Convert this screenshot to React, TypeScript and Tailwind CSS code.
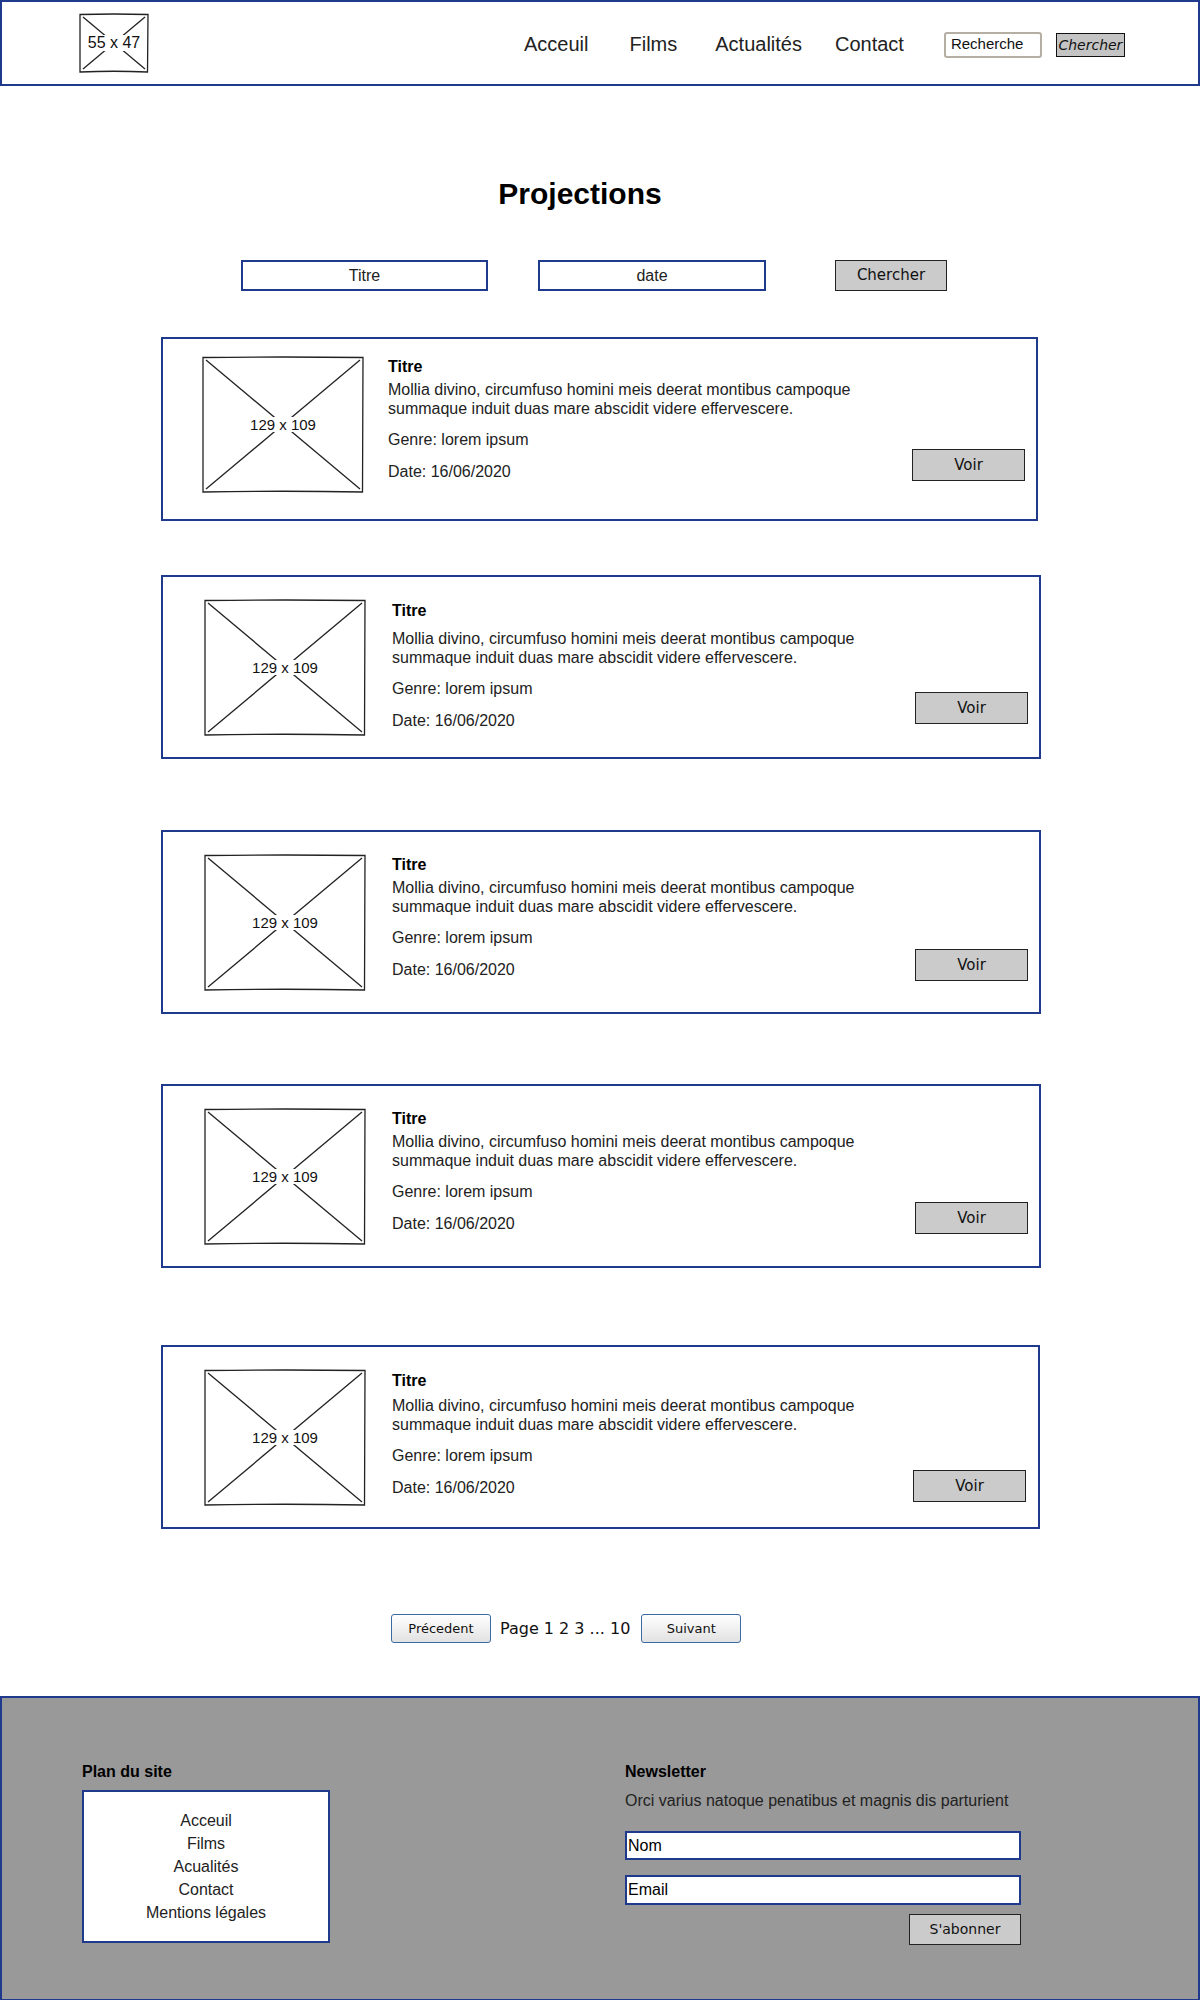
const BLUE = "border-[#1f3a8c]";

const cards = [
  { mt: "mt-[46px]", w: "w-[877px]", img: "ml-[39px] mt-[17px]", txt: "ml-[24px] mt-[18px]", desc: "mt-[4px]", voir: "mt-[110px] mr-[11px]" },
  { mt: "mt-[54px]", w: "w-[880px]", img: "ml-[41px] mt-[22px]", txt: "ml-[26px] mt-[24px]", desc: "mt-[9px]", voir: "mt-[115px] mr-[11px]" },
  { mt: "mt-[71px]", w: "w-[880px]", img: "ml-[41px] mt-[22px]", txt: "ml-[26px] mt-[23px]", desc: "mt-[4px]", voir: "mt-[117px] mr-[11px]" },
  { mt: "mt-[70px]", w: "w-[880px]", img: "ml-[41px] mt-[22px]", txt: "ml-[26px] mt-[23px]", desc: "mt-[4px]", voir: "mt-[116px] mr-[11px]" },
  { mt: "mt-[77px]", w: "w-[879px]", img: "ml-[41px] mt-[22px]", txt: "ml-[26px] mt-[24px]", desc: "mt-[6px]", voir: "mt-[123px] mr-[12px]" },
];

function Placeholder({ w, h, label, textSize }: { w: number; h: number; label: string; textSize: string }) {
  return (
    <div className="relative" style={{ width: w, height: h }}>
      <svg width={w} height={h} className="absolute inset-0" fill="none" stroke="#222" strokeWidth="1.3">
        <path d={`M1 1.5 Q${w / 2} 0.5 ${w - 1} 1.5 L${w - 1.5} ${h - 1} Q${w / 2} ${h - 2.5} 1 ${h - 1} Z`} />
        <line x1="4" y1="4" x2={w - 4} y2={h - 4} />
        <line x1={w - 4} y1="4" x2="4" y2={h - 4} />
      </svg>
      <div className="absolute inset-0 flex items-center justify-center">
        <span className={`bg-white px-[2px] leading-none text-[#111] ${textSize}`}>{label}</span>
      </div>
    </div>
  );
}

function Card({ c }: { c: (typeof cards)[number] }) {
  return (
    <div className={`${c.mt} ml-[161px] ${c.w} h-[184px] border-2 ${BLUE} flex`}>
      <div className={c.img}>
        <Placeholder w={162} h={137} label="129 x 109" textSize="text-[15px]" />
      </div>
      <div className={`${c.txt} flex-1 text-[16px] leading-[19px] text-[#222]`}>
        <div className="font-bold text-black">Titre</div>
        <p className={c.desc}>
          Mollia divino, circumfuso homini meis deerat montibus campoque
          <br />
          summaque induit duas mare abscidit videre effervescere.
        </p>
        <p className="mt-[12px]">Genre: lorem ipsum</p>
        <p className="mt-[13px]">Date: 16/06/2020</p>
      </div>
      <div className={c.voir}>
        <button className="w-[113px] h-[32px] bg-[#cbcbcb] border border-[#222] text-[15px] text-[#111] font-['DejaVu_Sans',sans-serif]">
          Voir
        </button>
      </div>
    </div>
  );
}

export default function App() {
  return (
    <div className="w-[1200px] bg-white font-['Liberation_Sans',Arial,sans-serif] text-[#111]">
      <header className={`h-[86px] border-2 ${BLUE} flex items-center`}>
        <div className="ml-[77px]">
          <Placeholder w={70} h={60} label="55 x 47" textSize="text-[16px]" />
        </div>
        <nav className="ml-[375px] mt-[2px] flex items-center text-[20px] text-[#222]">
          <span>Acceuil</span>
          <span className="ml-[41px]">Films</span>
          <span className="ml-[38px]">Actualités</span>
          <span className="ml-[33px]">Contact</span>
        </nav>
        <div className="ml-[40px] mt-[3px] w-[98px] h-[26px] border-2 border-[#b5aea3] rounded-[3px] flex items-center px-[5px] text-[15px] text-[#111]">
          Recherche
        </div>
        <button className="ml-[14px] mt-[3px] w-[69px] h-[24px] bg-[#c4c4c4] border border-[#111] text-[14px] italic text-[#111] font-['DejaVu_Sans',sans-serif] leading-none">
          Chercher
        </button>
      </header>

      <h1 className="mt-[90px] pr-[40px] text-center text-[30px] leading-[36px] font-bold text-black">
        Projections
      </h1>

      <div className="mt-[48px] ml-[241px] flex items-center text-[16px] text-[#222]">
        <div className={`w-[247px] h-[31px] border-2 ${BLUE} flex items-center justify-center`}>Titre</div>
        <div className={`ml-[50px] w-[228px] h-[31px] border-2 ${BLUE} flex items-center justify-center`}>date</div>
        <button className="ml-[69px] w-[112px] h-[31px] bg-[#cbcbcb] border border-[#222] text-[15px] text-[#111] font-['DejaVu_Sans',sans-serif]">
          Chercher
        </button>
      </div>

      {cards.map((c, i) => (
        <Card key={i} c={c} />
      ))}

      <div className="mt-[85px] ml-[391px] flex items-center">
        <button className="w-[100px] h-[29px] rounded-[3px] border border-[#3b6aa3] bg-linear-to-b from-white to-[#e2e2e2] text-[13px] text-[#111] font-['DejaVu_Sans',sans-serif]">
          Précedent
        </button>
        <span className="ml-[9px] text-[16px] text-[#111] font-['DejaVu_Sans',sans-serif]">Page 1 2 3 ... 10</span>
        <button className="ml-[11px] w-[100px] h-[29px] rounded-[3px] border border-[#3b6aa3] bg-linear-to-b from-white to-[#e2e2e2] text-[13px] text-[#111] font-['DejaVu_Sans',sans-serif]">
          Suivant
        </button>
      </div>

      <footer className={`mt-[53px] h-[305px] border-2 ${BLUE} bg-[#999999] flex`}>
        <div className="ml-[80px] pt-[64px]">
          <div className="font-bold text-[16px] leading-[19px] text-black">Plan du site</div>
          <div className={`mt-[9px] w-[248px] h-[153px] border-2 ${BLUE} bg-white pt-[17px] text-center text-[16px] leading-[23px] text-[#222]`}>
            <div>Acceuil</div>
            <div>Films</div>
            <div>Acualités</div>
            <div>Contact</div>
            <div>Mentions légales</div>
          </div>
        </div>
        <div className="ml-[295px] pt-[64px] w-[396px]">
          <div className="font-bold text-[16px] leading-[19px] text-black">Newsletter</div>
          <p className="mt-[10px] text-[16px] leading-[19px] text-[#222]">
            Orci varius natoque penatibus et magnis dis parturient
          </p>
          <div className={`mt-[21px] h-[29px] border-2 ${BLUE} bg-white flex items-center px-[1px] text-[16px] text-black`}>Nom</div>
          <div className={`mt-[15px] h-[30px] border-2 ${BLUE} bg-white flex items-center px-[1px] text-[16px] text-black`}>Email</div>
          <div className="mt-[9px] flex justify-end">
            <button className="w-[112px] h-[31px] bg-[#cbcbcb] border border-[#222] text-[14px] text-[#111] font-['DejaVu_Sans',sans-serif]">
              S'abonner
            </button>
          </div>
        </div>
      </footer>
    </div>
  );
}
